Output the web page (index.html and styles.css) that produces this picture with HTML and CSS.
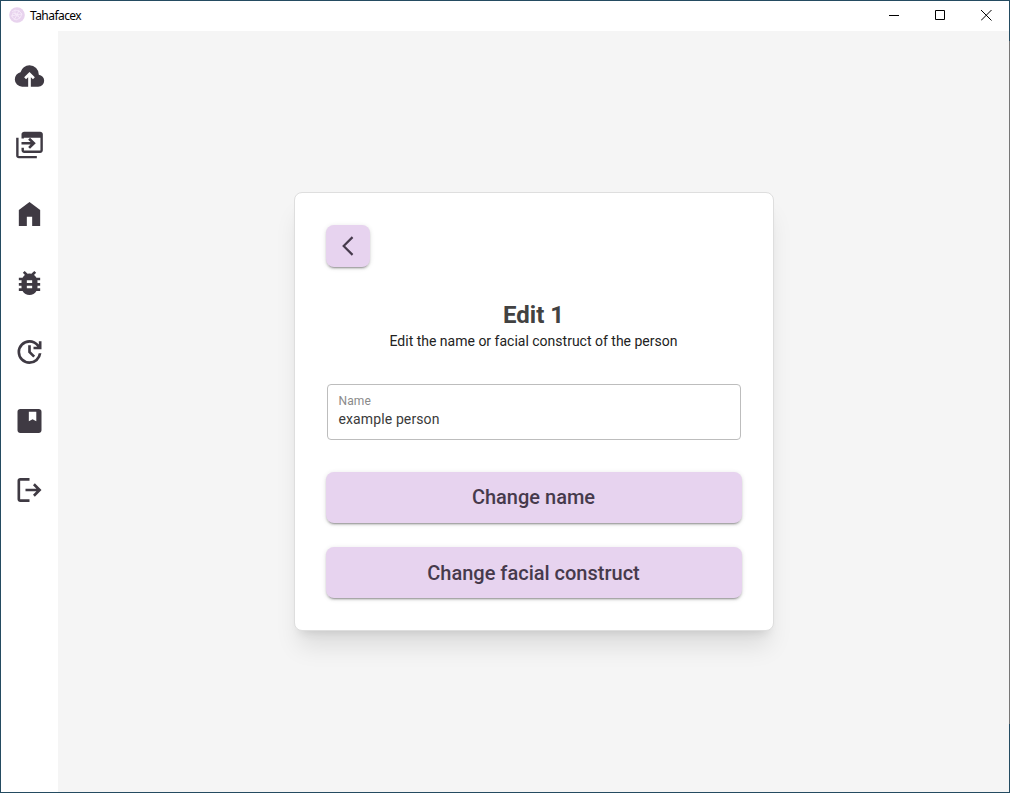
FILE: index.html
```html
<!DOCTYPE html>
<html lang="en">
<head>
<meta charset="utf-8">
<title>Tahafacex</title>
<link rel="stylesheet" href="styles.css">
</head>
<body>
<div class="window">
  <header class="titlebar">
    <svg class="logo" viewBox="0 0 16 16"><circle cx="8" cy="8" r="7.8" fill="#e8d3ee"/><path d="M3 5l3-2 4 1 3 3-2 4-4 2-4-3 1-4 4 1 2 3M6 3v4l5 4M2 9l5-1 6-1M5 13l3-5 2-5" fill="none" stroke="#f7ecfa" stroke-width=".8"/></svg>
    <span class="app-name">Tahafacex</span>
    <div class="controls">
      <svg viewBox="0 0 11 11"><path d="M0 5.5h10"/></svg>
      <svg viewBox="0 0 11 11"><path d="M.5.5h9v9h-9z"/></svg>
      <svg viewBox="0 0 11 11"><path d="M0 0l10.5 10.5M10.5 0L0 10.5"/></svg>
    </div>
  </header>
  <div class="body">
    <nav class="sidebar">
      <svg viewBox="0 0 24 24"><path d="M11 20H6.5Q4.22 20 2.61 18.43 1 16.85 1 14.58 1 12.63 2.17 11.1 3.35 9.57 5.25 9.15 5.88 6.85 7.75 5.43 9.63 4 12 4 14.93 4 16.96 6.04 19 8.07 19 11 20.73 11.2 21.86 12.5 23 13.78 23 15.5 23 17.38 21.69 18.69 20.38 20 18.5 20H13V12.85L14.6 14.4 16 13 12 9 8 13 9.4 14.4 11 12.85Z"/></svg>
      <svg viewBox="0 0 24 24"><path d="M2 6.5h1.8v13.7h13.7V22H4q-.8 0-1.4-.6T2 20Z"/><path d="M6 7.2V4q0-.8.6-1.4T8 2h12q.8 0 1.4.6T22 4v12q0 .8-.6 1.4T20 18H8q-.8 0-1.4-.6T6 16v-2h1.8v2.2h12.4V6.5H7.8v.7Z"/><path d="M6 9.8h6.8l-1.8-1.8 1.4-1.4 4.3 4.1-4.3 4.2-1.4-1.4 1.8-1.8H6Z"/></svg>
      <svg viewBox="0 0 24 24"><path d="M4 21V9l8-6 8 6v12h-6v-7h-4v7Z"/></svg>
      <svg viewBox="0 0 24 24"><path d="M12 21q-1.62 0-3.01-.8T6.8 18H4v-2h2.1q-.08-.5-.09-1T6 14H4v-2h2q0-.5.01-1t.09-1H4V8h2.8q.35-.57.79-1.07T8.6 6.05L7 4.4 8.4 3l2.15 2.15q.7-.22 1.42-.22t1.43.22L15.6 3 17 4.4l-1.65 1.65q.58.37 1.04.86T17.2 8H20v2h-2.1q.08.5.09 1T18 12h2v2h-2q0 .5-.01 1t-.09 1H20v2h-2.8q-.8 1.4-2.19 2.2T12 21Zm-2-5h4v-2h-4v2Zm0-4h4v-2h-4v2Z"/></svg>
      <svg viewBox="0 0 24 24"><path d="M12 21q-1.88 0-3.51-.71t-2.85-1.93q-1.21-1.21-1.93-2.85T3 12q0-1.87.71-3.51t1.93-2.85q1.21-1.21 2.85-1.93T12 3q2.05 0 3.89.88T19 6.35V4h2v6h-6V8h2.75q-1.03-1.4-2.52-2.2T12 5Q9.07 5 7.04 7.04T5 12t2.04 4.96T12 19q2.62 0 4.59-1.7T18.9 13h2.05q-.37 3.43-2.94 5.71T12 21Zm2.8-4.8L11 12.4V7h2v4.6l3.2 3.2Z"/></svg>
      <svg viewBox="0 0 24 24"><path fill-rule="evenodd" d="M5 21q-.82 0-1.41-.59T3 19V5q0-.82.59-1.41T5 3h14q.83 0 1.41.59T21 5v14q0 .83-.59 1.41T19 21ZM11.5 5v7.2l2.8-1.5 2.8 1.5V5Z"/></svg>
      <svg viewBox="0 0 24 24"><path d="M5 21q-.82 0-1.41-.59T3 19V5q0-.82.59-1.41T5 3h7v2H5v14h7v2H5Zm11-4-1.38-1.45L17.18 13H9v-2h8.18l-2.56-2.55L16 7l5 5-5 5Z"/></svg>
    </nav>
    <main class="content">
      <section class="card">
        <button class="button back" aria-label="Back"><svg viewBox="0 0 24 24"><path d="M16.2 3.8 8 12l8.2 8.2"/></svg></button>
        <h1 class="title">Edit 1</h1>
        <p class="subtitle">Edit the name or facial construct of the person</p>
        <div class="field">
          <span class="label">Name</span>
          <span class="value">example person</span>
        </div>
        <button class="button wide name-button">Change name</button>
        <button class="button wide">Change facial construct</button>
      </section>
    </main>
  </div>
</div>
</body>
</html>
```
FILE: styles.css
```css
* { box-sizing: border-box; }
body { margin: 0; font-family: Roboto, sans-serif; }
.window {
  display: flex;
  flex-direction: column;
  height: 793px;
  padding: 1px;
  background:
    linear-gradient(#fff, #fff) content-box no-repeat,
    linear-gradient(#244b61 41px, #777 41px, #777 724px, #244b61 724px) right / 1px 100% no-repeat,
    #244b61;
}
.titlebar {
  display: flex;
  align-items: center;
  height: 30px;
  flex: none;
  padding-left: 8px;
}
.logo { width: 16px; height: 16px; margin-top: -2px; }
.app-name {
  margin: -1px 0 0 5px;
  font: 12px "Noto Sans", sans-serif;
  letter-spacing: -0.55px;
  color: #000;
}
.controls { display: flex; gap: 35px; margin: -1px 17px 0 auto; }
.controls svg {
  width: 11px;
  height: 11px;
  fill: none;
  stroke: #000;
  stroke-width: 1;
}
.body { display: flex; flex: 1; }
.sidebar {
  display: flex;
  flex-direction: column;
  align-items: center;
  gap: 37px;
  width: 57px;
  padding-top: 29px;
}
.sidebar svg { width: 33px; height: 32px; flex: none; fill: #3f3a43; }
.content {
  display: flex;
  flex: 1;
  align-items: center;
  justify-content: center;
  background: #f5f5f5;
}
.card {
  display: flex;
  flex-direction: column;
  width: 480px;
  height: 439px;
  padding: 32px 31px;
  border: 1px solid #dedede;
  border-radius: 8px;
  background: #fff;
  box-shadow: 0 20px 25px -5px rgba(0, 0, 0, .1), 0 8px 10px -6px rgba(0, 0, 0, .1);
}
.button {
  padding: 0;
  border: 0;
  border-radius: 8px;
  background: #e7d3ef;
  color: #463a4c;
  font: 500 20px/24px Roboto, sans-serif;
  box-shadow: 0 3px 1px -2px rgba(0, 0, 0, .2), 0 2px 2px rgba(0, 0, 0, .14), 0 1px 5px rgba(0, 0, 0, .12);
}
.back {
  display: flex;
  align-items: center;
  justify-content: center;
  width: 44px;
  height: 42px;
}
.back svg {
  width: 26px;
  height: 26px;
  fill: none;
  stroke: #463a4c;
  stroke-width: 2;
}
.title {
  margin: 32px 0 0;
  font-size: 24px;
  line-height: 32px;
  font-weight: 700;
  text-align: center;
  color: #424242;
}
.subtitle {
  margin: 0;
  font-size: 14px;
  line-height: 20px;
  text-align: center;
  color: #222;
}
.field {
  display: flex;
  flex-direction: column;
  height: 56px;
  margin: 33px 1px 32px;
  padding: 8px 11px;
  border: 1px solid #bdbdbd;
  border-radius: 4px;
}
.label { font-size: 12px; line-height: 16px; color: #8a8a8a; letter-spacing: 0.1px; }
.value { font-size: 14px; line-height: 20px; color: #3a3a3a; letter-spacing: 0.12px; }
.wide { height: 51px; flex: none; }
.wide + .wide { margin-top: 24px; }
.name-button { padding-bottom: 2px; }
```
